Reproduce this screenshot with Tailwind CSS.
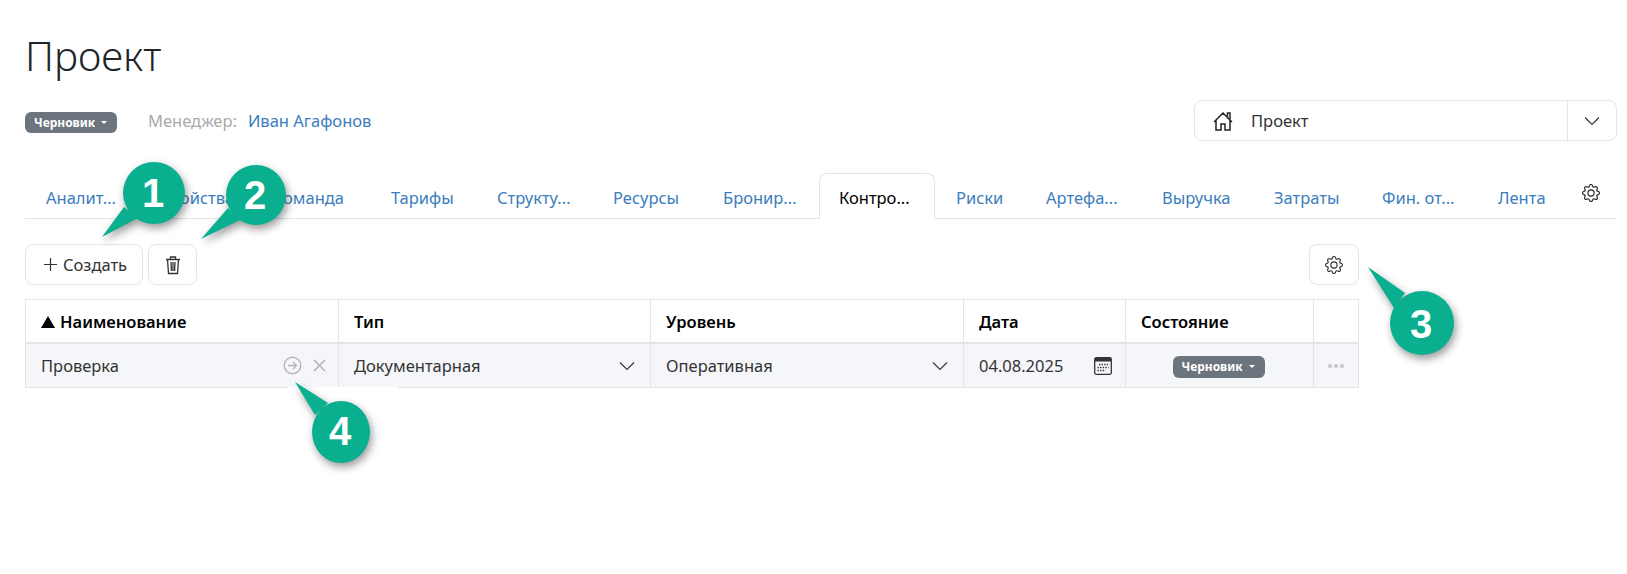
<!DOCTYPE html>
<html lang="ru">
<head>
  <meta charset="UTF-8">
  <title>Проект</title>
  <script src="https://cdn.jsdelivr.net/npm/@tailwindcss/browser@4"></script>
</head>
<body class="bg-white text-[#333] font-['Noto_Sans',sans-serif] text-[16.5px] overflow-hidden">
<div class="relative w-[1627px] h-[574px] pl-[25px] pr-[10px]">

  <!-- Header -->
  <h1 class="pt-[28px] h-[88px] text-[40.5px] leading-[56px] font-light text-[#212529]">Проект</h1>

  <div class="flex items-start h-[85px] pt-[12px]">
    <div class="flex items-center mt-[9px]">
      <span class="flex items-center gap-[6px] h-[21px] w-[92px] pl-[9px] rounded-[6px] bg-[#6c757d] text-white text-[12px] font-bold mt-[3px]">Черновик
        <span class="w-0 h-0 border-x-[3px] border-x-transparent border-t-[3px] border-t-white"></span>
      </span>
      <span class="ml-[31px] text-[#aaa]">Менеджер:</span>
      <a class="ml-[11px] text-[#3b7dbd]">Иван Агафонов</a>
    </div>
    <div class="ml-auto flex w-[423px] h-[41px] border border-[#e2e4e8] rounded-[8px]">
      <div class="flex items-center flex-1 pl-[17px]">
        <svg class="w-[22px] h-[22px]" viewBox="0 0 22 22" fill="none" stroke="#212529" stroke-width="1.5"><path d="M2 12 11 3l9 9M4 10v10h5v-6h4v6h5V10M15.500 6.500V3h2.500v6"/></svg>
        <span class="ml-[17px] pt-[1px]">Проект</span>
      </div>
      <div class="flex items-center justify-center w-[49px] border-l border-[#e2e4e8]">
        <svg class="w-[16px] h-[16px]" viewBox="0 0 16 16" fill="none" stroke="#333" stroke-width="1.100"><path d="m1 4.500 7 7 7-7"/></svg>
      </div>
    </div>
  </div>

  <!-- Tabs -->
  <div class="relative flex items-end h-[46px] border-b border-[#e2e4e8] text-[#3b7dbd]">
    <a class="w-[114px] h-[50px] pl-[21px] pt-[18px]">Аналит...</a>
    <a class="w-[113px] h-[50px] pl-[21px] pt-[18px]">Свойства</a>
    <a class="w-[118px] h-[50px] pl-[21px] pt-[18px]">Команда</a>
    <a class="w-[106px] h-[50px] pl-[21px] pt-[18px]">Тарифы</a>
    <a class="w-[116px] h-[50px] pl-[21px] pt-[18px]">Структу...</a>
    <a class="w-[110px] h-[50px] pl-[21px] pt-[18px]">Ресурсы</a>
    <a class="w-[117px] h-[50px] pl-[21px] pt-[18px]">Бронир...</a>
    <a class="w-[116px] h-[46px] -mb-px pl-[19px] pt-[12px] bg-white border border-b-0 border-[#e2e4e8] rounded-t-[8px] text-black">Контро...</a>
    <a class="w-[90px] h-[50px] pl-[21px] pt-[18px]">Риски</a>
    <a class="w-[116px] h-[50px] pl-[21px] pt-[18px]">Артефа...</a>
    <a class="w-[112px] h-[50px] pl-[21px] pt-[18px]">Выручка</a>
    <a class="w-[108px] h-[50px] pl-[21px] pt-[18px]">Затраты</a>
    <a class="w-[116px] h-[50px] pl-[21px] pt-[18px]">Фин. от...</a>
    <a class="w-[112px] h-[50px] pl-[21px] pt-[18px]">Лента</a>
    <svg class="absolute left-[1557px] top-[11px] w-[18px] h-[18px] text-[#212529]" viewBox="0 0 16 16" fill="currentColor"><path d="M8 4.754a3.246 3.246 0 1 0 0 6.492 3.246 3.246 0 0 0 0-6.492zM5.754 8a2.246 2.246 0 1 1 4.492 0 2.246 2.246 0 0 1-4.492 0z"/><path d="M9.796 1.343c-.527-1.79-3.065-1.79-3.592 0l-.094.319a.873.873 0 0 1-1.255.52l-.292-.16c-1.64-.892-3.433.902-2.54 2.541l.159.292a.873.873 0 0 1-.52 1.255l-.319.094c-1.79.527-1.79 3.065 0 3.592l.319.094a.873.873 0 0 1 .52 1.255l-.16.292c-.892 1.64.901 3.434 2.541 2.54l.292-.159a.873.873 0 0 1 1.255.52l.094.319c.527 1.79 3.065 1.79 3.592 0l.094-.319a.873.873 0 0 1 1.255-.52l.292.16c1.64.893 3.434-.902 2.54-2.541l-.159-.292a.873.873 0 0 1 .52-1.255l.319-.094c1.79-.527 1.79-3.065 0-3.592l-.319-.094a.873.873 0 0 1-.52-1.255l.16-.292c.893-1.64-.902-3.433-2.541-2.54l-.292.159a.873.873 0 0 1-1.255-.52l-.094-.319zm-2.633.283c.246-.835 1.428-.835 1.674 0l.094.319a1.873 1.873 0 0 0 2.693 1.115l.291-.16c.764-.415 1.6.42 1.184 1.185l-.159.292a1.873 1.873 0 0 0 1.116 2.692l.318.094c.835.246.835 1.428 0 1.674l-.319.094a1.873 1.873 0 0 0-1.115 2.693l.16.291c.415.764-.42 1.6-1.185 1.184l-.291-.159a1.873 1.873 0 0 0-2.693 1.116l-.094.318c-.246.835-1.428.835-1.674 0l-.094-.319a1.873 1.873 0 0 0-2.692-1.115l-.292.16c-.764.415-1.6-.42-1.184-1.185l.159-.291A1.873 1.873 0 0 0 1.945 8.93l-.319-.094c-.835-.246-.835-1.428 0-1.674l.319-.094A1.873 1.873 0 0 0 3.06 4.377l-.16-.292c-.415-.764.42-1.6 1.185-1.184l.292.159a1.873 1.873 0 0 0 2.692-1.115l.094-.319z"/></svg>
  </div>

  <!-- Toolbar -->
  <div class="flex w-[1334px] mt-[25px] gap-[5px]">
    <button class="flex items-center w-[118px] h-[41px] pl-[17px] border border-[#e2e4e8] rounded-[8px]">
      <svg class="w-[15px] h-[15px]" viewBox="0 0 15 15" stroke="#333" stroke-width="1.200"><path d="M7.500 1v13M1 7.500h13"/></svg>
      <span class="ml-[5px] pt-[2px]">Создать</span>
    </button>
    <button class="flex items-center justify-center w-[49px] h-[41px] border border-[#e2e4e8] rounded-[8px]">
      <svg class="w-[18px] h-[20px]" viewBox="0 0 18 20" fill="none" stroke="#333" stroke-width="1.300"><path d="M2 4.500h14M6.500 4.500V2h5v2.500M3.500 4.500l1 14h9l1-14M7 7l.4 9M9 7v9M11 7l-.4 9"/></svg>
    </button>
    <button class="ml-auto flex items-center justify-center w-[50px] h-[41px] border border-[#e2e4e8] rounded-[8px]">
      <svg class="w-[18px] h-[18px] text-[#333]" viewBox="0 0 16 16" fill="currentColor"><path d="M8 4.754a3.246 3.246 0 1 0 0 6.492 3.246 3.246 0 0 0 0-6.492zM5.754 8a2.246 2.246 0 1 1 4.492 0 2.246 2.246 0 0 1-4.492 0z"/><path d="M9.796 1.343c-.527-1.79-3.065-1.79-3.592 0l-.094.319a.873.873 0 0 1-1.255.52l-.292-.16c-1.64-.892-3.433.902-2.54 2.541l.159.292a.873.873 0 0 1-.52 1.255l-.319.094c-1.79.527-1.79 3.065 0 3.592l.319.094a.873.873 0 0 1 .52 1.255l-.16.292c-.892 1.64.901 3.434 2.541 2.54l.292-.159a.873.873 0 0 1 1.255.52l.094.319c.527 1.79 3.065 1.79 3.592 0l.094-.319a.873.873 0 0 1 1.255-.52l.292.16c1.64.893 3.434-.902 2.54-2.541l-.159-.292a.873.873 0 0 1 .52-1.255l.319-.094c1.79-.527 1.79-3.065 0-3.592l-.319-.094a.873.873 0 0 1-.52-1.255l.16-.292c.893-1.64-.902-3.433-2.541-2.54l-.292.159a.873.873 0 0 1-1.255-.52l-.094-.319zm-2.633.283c.246-.835 1.428-.835 1.674 0l.094.319a1.873 1.873 0 0 0 2.693 1.115l.291-.16c.764-.415 1.6.42 1.184 1.185l-.159.292a1.873 1.873 0 0 0 1.116 2.692l.318.094c.835.246.835 1.428 0 1.674l-.319.094a1.873 1.873 0 0 0-1.115 2.693l.16.291c.415.764-.42 1.6-1.185 1.184l-.291-.159a1.873 1.873 0 0 0-2.693 1.116l-.094.318c-.246.835-1.428.835-1.674 0l-.094-.319a1.873 1.873 0 0 0-2.692-1.115l-.292.16c-.764.415-1.6-.42-1.184-1.185l.159-.291A1.873 1.873 0 0 0 1.945 8.93l-.319-.094c-.835-.246-.835-1.428 0-1.674l.319-.094A1.873 1.873 0 0 0 3.06 4.377l-.16-.292c-.415-.764.42-1.6 1.185-1.184l.292.159a1.873 1.873 0 0 0 2.692-1.115l.094-.319z"/></svg>
    </button>
  </div>

  <!-- Table -->
  <div class="mt-[14px] w-[1334px] border border-[#e2e4e8]">
    <div class="grid grid-cols-[312px_312px_313px_162px_188px_1fr] h-[44px] border-b-2 border-[#e2e4e8] font-semibold text-black">
      <div class="flex items-center pl-[15px] pt-[2px]">
        <svg class="w-[14px] h-[12px] mr-[5px]" viewBox="0 0 14 12" fill="#000"><path d="M7 0l7 12H0z"/></svg>
        Наименование
      </div>
      <div class="flex items-center pl-[15px] pt-[2px] border-l border-[#e2e4e8]">Тип</div>
      <div class="flex items-center pl-[15px] pt-[2px] border-l border-[#e2e4e8]">Уровень</div>
      <div class="flex items-center pl-[15px] pt-[2px] border-l border-[#e2e4e8]">Дата</div>
      <div class="flex items-center pl-[15px] pt-[2px] border-l border-[#e2e4e8]">Состояние</div>
      <div class="border-l border-[#e2e4e8]"></div>
    </div>
    <div class="grid grid-cols-[312px_312px_313px_162px_188px_1fr] h-[43px] bg-[#f5f6fa]">
      <div class="flex items-center pl-[15px] pr-[12px]">
        <span class="flex-1 pt-[1px]">Проверка</span>
        <svg class="w-[19px] h-[19px]" viewBox="0 0 19 19" fill="none" stroke="#b5b5b5" stroke-width="1.400"><circle cx="9.500" cy="9.500" r="8.300"/><path d="M5 9.500h8.500M10 6l3.500 3.500L10 13"/></svg>
        <svg class="ml-[11px] w-[13px] h-[13px]" viewBox="0 0 13 13" stroke="#b5b5b5" stroke-width="1.600"><path d="m1 1 11 11M12 1 1 12"/></svg>
      </div>
      <div class="flex items-center justify-between pl-[15px] pr-[15px] border-l border-[#e2e4e8]">
        <span class="pt-[1px]">Документарная</span>
        <svg class="w-[16px] h-[16px]" viewBox="0 0 16 16" fill="none" stroke="#333" stroke-width="1.100"><path d="m1 4.500 7 7 7-7"/></svg>
      </div>
      <div class="flex items-center justify-between pl-[15px] pr-[15px] border-l border-[#e2e4e8]">
        <span class="pt-[1px]">Оперативная</span>
        <svg class="w-[16px] h-[16px]" viewBox="0 0 16 16" fill="none" stroke="#333" stroke-width="1.100"><path d="m1 4.500 7 7 7-7"/></svg>
      </div>
      <div class="flex items-center justify-between pl-[15px] pr-[13px] border-l border-[#e2e4e8]">
        <span class="pt-[1px]">04.08.2025</span>
        <svg class="w-[18px] h-[18px]" viewBox="0 0 18 18" fill="none"><rect x=".7" y=".7" width="16.600" height="16.600" rx="1.500" stroke="#333" stroke-width="1.300"/><path d="M1 1h16v3.500H1z" fill="#333"/><path d="M5 7.500h9M3.500 10.500h11M3.500 13.500h8" stroke="#333" stroke-width="1.400" stroke-dasharray="1.400 1.200"/></svg>
      </div>
      <div class="flex items-center justify-center border-l border-[#e2e4e8]">
        <span class="flex items-center gap-[6px] h-[22px] w-[92px] pl-[9px] mt-[2px] mr-[2px] rounded-[6px] bg-[#6c757d] text-white text-[12px] font-bold">Черновик
          <span class="w-0 h-0 border-x-[3px] border-x-transparent border-t-[3px] border-t-white"></span>
        </span>
      </div>
      <div class="flex items-center justify-center gap-[2px] border-l border-[#e2e4e8]">
        <span class="w-[4px] h-[4px] rounded-full bg-[#c4c4c4]"></span>
        <span class="w-[4px] h-[4px] rounded-full bg-[#c4c4c4]"></span>
        <span class="w-[4px] h-[4px] rounded-full bg-[#c4c4c4]"></span>
      </div>
    </div>
  </div>

  <!-- Callouts over the page -->
  <div class="absolute left-[288px] top-[387px] w-[110px] h-[3px] bg-white"></div>
  <svg class="absolute left-0 top-0 w-[1627px] h-[574px] pointer-events-none" viewBox="0 0 1627 574">
    <g class="drop-shadow-[2px_4px_4px_rgba(0,0,0,0.4)]" fill="#0aaf8f">
      <path d="M102 237 124 207 138 218z"/><circle cx="154" cy="193" r="31"/>
      <path d="M201 239 228 208 240 220z"/><circle cx="256" cy="195" r="30"/>
      <path d="M1368 267 1405 293 1394 308z"/><circle cx="1422" cy="323" r="32"/>
      <path d="M295 382 328 403 315 415z"/><ellipse cx="341" cy="432" rx="29" ry="31"/>
    </g>
    <g fill="#fff" font-family="Liberation Sans, sans-serif" font-weight="700" font-size="40" text-anchor="middle">
      <text x="153" y="207">1</text>
      <text x="255" y="209">2</text>
      <text x="1421" y="338">3</text>
      <text x="340" y="445">4</text>
    </g>
  </svg>
</div>
</body>
</html>
